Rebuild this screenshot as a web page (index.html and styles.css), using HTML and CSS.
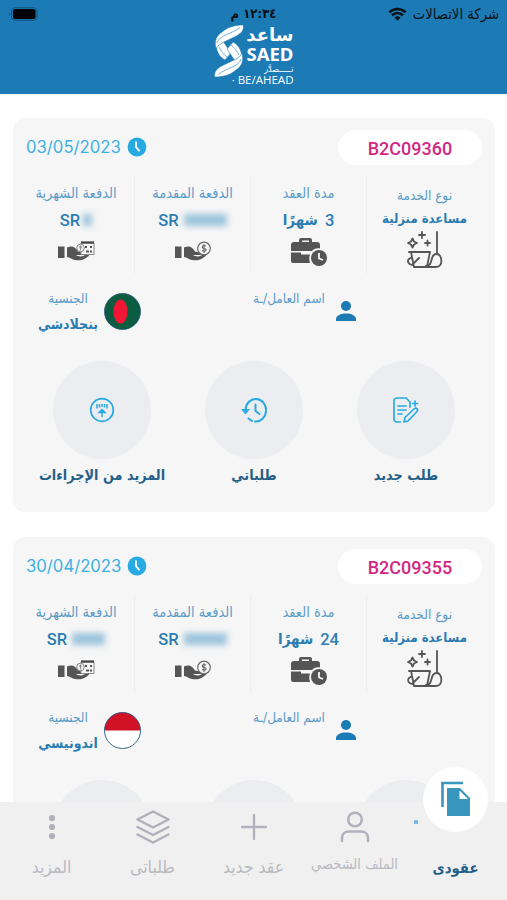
FILE: index.html
```html
<!DOCTYPE html>
<html lang="ar" dir="rtl">
<head>
  <meta charset="UTF-8" />
  <meta name="viewport" content="width=device-width, initial-scale=1.0"/>
  <title>ساعد - عقودي</title>
  <link rel="stylesheet" href="styles.css">
</head>
<body>
  <!-- Shared icons -->
  <svg class="sprite" width="0" height="0">
    <symbol id="i-clock" viewBox="0 0 20 20">
      <circle cx="10" cy="10" r="9.4" fill="#27aae1"/>
      <path d="M9 5.2v5l3 3.4" fill="none" stroke="#fff" stroke-width="1.8" stroke-linecap="round"/>
    </symbol>
    <symbol id="i-clean" viewBox="0 0 37 38">
      <g fill="none" stroke="#555" stroke-width="1.8" stroke-linejoin="round" stroke-linecap="round">
        <path d="M6.500 7.500 8 10.500l3 1.500-3 1.500-1.500 3L5 13.500 2 12l3-1.500zM16 1v6M13 4h6M21.500 9.500v5M19 12h5M31 1v22M3 21h21M5 21l3 15M24 21l-3 14.500M8 36h22c8 0 6-13 1-13-8 0-3 12-11 12M13 27l-7 7c-4-1-5-4-3-6l3-2"/>
      </g>
    </symbol>
    <symbol id="i-case" viewBox="0 0 38 30">
      <path fill-rule="evenodd" d="M9 5V3a2 2 0 0 1 2-2h9a2 2 0 0 1 2 2v2h5a3 3 0 0 1 3 3v3.500c-4-.5-6 .5-8 2.500H1V8a3 3 0 0 1 3-3zM12 5h7V3.500h-7zM1 15.500h10v2h9c-1 3-1 5 0 8.500H3a2 2 0 0 1-2-2z" fill="#555"/>
      <circle cx="29" cy="21" r="8" fill="#555"/>
      <path d="M29 16v5.500l4 1.500" fill="none" stroke="#f6f6f6" stroke-width="1.800"/>
    </symbol>
    <symbol id="i-hand" viewBox="0 0 38 20">
      <path d="M1 5.500h6.500V17H1zM10 6.500c5-2 8-1 11 4l5 1c2 1 1 2.500-1 2.500h-6c3 2 6 1.500 8 .5l4-1.500c2 0 1 2 0 2.500-4 3.500-9 4.500-13 3.500-3 0-5-3-8-3z" fill="#555"/>
    </symbol>
    <symbol id="i-coin" viewBox="0 0 38 20">
      <use href="#i-hand"/>
      <circle cx="30" cy="7.500" r="6.300" fill="#f6f6f6" stroke="#666" stroke-width="1.200"/>
      <path d="M32 5c-4-2-5 2-2 2.500 4 .5 2 4-2 2M30 3v9" fill="none" stroke="#666" stroke-width="1.100"/>
    </symbol>
    <symbol id="i-calendar" viewBox="0 0 38 20">
      <use href="#i-hand"/>
      <path d="M24 2h13v11.500H24z" fill="#f6f6f6" stroke="#888" stroke-width="1"/>
      <path d="M24 1.500h13" stroke="#444" stroke-width="2.200"/>
      <path d="M28 6h2m3 0h2M29 10.500h3m1 0h2" stroke="#555" stroke-width="2"/>
      <circle cx="23.500" cy="7" r="3.800" fill="#eee" stroke="#888"/>
      <path d="M23.500 4.500v5M22 6h3" stroke="#777" stroke-width=".8"/>
    </symbol>
    <symbol id="i-person" viewBox="0 0 20 20">
      <circle cx="10" cy="5" r="5" fill="#1c7ab5"/>
      <path d="M0 20v-2c0-3.500 5-5.500 10-5.500s10 2 10 5.500v2z" fill="#1c7ab5"/>
    </symbol>
    <symbol id="i-new" viewBox="0 0 26 26">
      <g fill="none" stroke="#27aae1" stroke-width="1.700" stroke-linecap="round" stroke-linejoin="round">
        <path d="M7.500 25H4a3 3 0 0 1-3-3V4a3 3 0 0 1 3-3h9l4 4v5M5 9h8M5 13h8M5 17h4M12 20.500 21.500 11.500c2-1 4 1 2.500 3L15 24l-4 1zM22 4v5M19.500 6.500h5"/>
      </g>
    </symbol>
    <symbol id="i-history" viewBox="0 0 26 26">
      <path d="M4.500 13a10.300 11.300 0 1 1 9.500 11.500M11 24l-3.500-2.500M14.500 7.500v6.500l4 3" fill="none" stroke="#27aae1" stroke-width="2" stroke-linecap="round" stroke-linejoin="round"/>
      <path d="M0 12h9l-4.500 5.500z" fill="#27aae1"/>
    </symbol>
    <symbol id="i-upload" viewBox="0 0 26 26">
      <circle cx="13" cy="13" r="11.300" fill="none" stroke="#27aae1" stroke-width="1.700"/>
      <path d="M8 7v4.500M10.500 7v3.500M13 7v3M15.500 7v3.500M18 7v4.500" stroke="#27aae1" stroke-width="1.500"/>
      <path d="M13 20v-6M10 15.500 13 12.500l3 3z" fill="#27aae1" stroke="#27aae1" stroke-width="1.500"/>
    </symbol>
  </svg>

  <header class="top">
    <div class="status">
      <div class="carrier">
        <span>شركة الاتصالات</span>
        <svg width="19" height="14" viewBox="0 0 19 14">
          <path d="M1.300 5.300c5-4.500 11.400-4.500 16.400 0M4 8.300c3.500-3 7.500-3 11 0" fill="none" stroke="#0b1117" stroke-width="2.500"/>
          <path d="M6.500 10.500c2-1.600 4-1.600 6 0l-3 3.200z" fill="#0b1117"/>
        </svg>
      </div>
      <div class="time">١٢:٣٤ م</div>
      <svg class="battery" width="30" height="14" viewBox="0 0 30 14">
        <rect x="3.500" y=".7" width="25.500" height="12.600" rx="4" fill="none" stroke="#155a86" stroke-width="1.200"/>
        <rect x="5" y="2" width="22.500" height="10" rx="2.500" fill="#000"/>
        <path d="M2 5v4Q0 7 2 5" fill="#155a86"/>
      </svg>
    </div>
    <div class="logo">
      <div class="logo-text">
        <span class="logo-ar">ساعد</span>
        <span class="logo-en">SAED</span>
        <span class="logo-sub">تـــــصدَّر</span>
        <span class="logo-tag">· BE/AHEAD</span>
      </div>
      <svg width="30" height="52" viewBox="0 0 30 52">
        <defs>
          <g id="ribbons">
            <path d="M2 17c0 8 2 14 9 18l6-7L9 16z"/>
            <path d="M29.500 0c.5 6-3 9-9 12L10 17c-4 2-7 4-8 7-2-8 0-13 6-17C14 2 20 0 29.500 0z"/>
            <path d="M3 18C5 10 18 9 26 2.500M5 22c2 4 4 7 8 10" fill="none"/>
          </g>
        </defs>
        <g fill="#fff" stroke="#1c7ab5" stroke-width=".6">
          <use href="#ribbons"/>
          <use href="#ribbons" transform="rotate(180 15 26)"/>
        </g>
      </svg>
    </div>
  </header>

  <main class="contracts">
    <section class="card">
      <div class="card-head">
        <div class="contract-no">B2C09360</div>
        <div class="date"><svg width="20" height="20"><use href="#i-clock"/></svg><span>03/05/2023</span></div>
      </div>
      <div class="details">
        <div class="detail service">
          <span class="label">نوع الخدمة</span>
          <span class="value">مساعدة منزلية</span>
          <svg width="37" height="38"><use href="#i-clean"/></svg>
        </div>
        <div class="detail">
          <span class="label">مدة العقد</span>
          <span class="value months"><b>3</b> شهرًا</span>
          <svg width="38" height="30"><use href="#i-case"/></svg>
        </div>
        <div class="detail">
          <span class="label">الدفعة المقدمة</span>
          <span class="value price"><b>SR</b><i class="hidden-amount"></i></span>
          <svg width="38" height="20"><use href="#i-coin"/></svg>
        </div>
        <div class="detail">
          <span class="label">الدفعة الشهرية</span>
          <span class="value price"><b>SR</b><i class="hidden-amount tiny"></i></span>
          <svg width="38" height="20"><use href="#i-calendar"/></svg>
        </div>
      </div>
      <div class="worker">
        <div class="worker-name">
          <svg width="20" height="20"><use href="#i-person"/></svg>
          <span class="label">اسم العامل/ـة</span>
        </div>
        <div class="nation">
          <svg width="37" height="37" viewBox="0 0 37 37">
            <circle cx="18.500" cy="18.500" r="18" fill="#0b5c41" stroke="#24577a" stroke-width=".8"/>
            <ellipse cx="16.500" cy="18.500" rx="7" ry="12" fill="#f21635"/>
          </svg>
          <div class="nation-text">
            <span class="label">الجنسية</span>
            <span class="value">بنجلادشي</span>
          </div>
        </div>
      </div>
      <div class="actions">
        <div class="action"><div class="round"><svg width="26" height="26"><use href="#i-new"/></svg></div><span>طلب جديد</span></div>
        <div class="action"><div class="round"><svg width="26" height="26"><use href="#i-history"/></svg></div><span>طلباتي</span></div>
        <div class="action"><div class="round"><svg width="26" height="26"><use href="#i-upload"/></svg></div><span>المزيد من الإجراءات</span></div>
      </div>
    </section>

    <section class="card">
      <div class="card-head">
        <div class="contract-no">B2C09355</div>
        <div class="date"><svg width="20" height="20"><use href="#i-clock"/></svg><span>30/04/2023</span></div>
      </div>
      <div class="details">
        <div class="detail service">
          <span class="label">نوع الخدمة</span>
          <span class="value">مساعدة منزلية</span>
          <svg width="37" height="38"><use href="#i-clean"/></svg>
        </div>
        <div class="detail">
          <span class="label">مدة العقد</span>
          <span class="value months"><b>24</b> شهرًا</span>
          <svg width="38" height="30"><use href="#i-case"/></svg>
        </div>
        <div class="detail">
          <span class="label">الدفعة المقدمة</span>
          <span class="value price"><b>SR</b><i class="hidden-amount"></i></span>
          <svg width="38" height="20"><use href="#i-coin"/></svg>
        </div>
        <div class="detail">
          <span class="label">الدفعة الشهرية</span>
          <span class="value price"><b>SR</b><i class="hidden-amount medium"></i></span>
          <svg width="38" height="20"><use href="#i-calendar"/></svg>
        </div>
      </div>
      <div class="worker">
        <div class="worker-name">
          <svg width="20" height="20"><use href="#i-person"/></svg>
          <span class="label">اسم العامل/ـة</span>
        </div>
        <div class="nation">
          <svg width="37" height="37" viewBox="0 0 37 37">
            <circle cx="18.500" cy="18.500" r="18" fill="#fff"/>
            <path d="M.5 18.500a18 18 0 0 1 36 0z" fill="#d01126"/>
            <circle cx="18.500" cy="18.500" r="18" fill="none" stroke="#24577a" stroke-width=".9"/>
          </svg>
          <div class="nation-text">
            <span class="label">الجنسية</span>
            <span class="value">اندونيسي</span>
          </div>
        </div>
      </div>
      <div class="actions">
        <div class="action"><div class="round"></div></div>
        <div class="action"><div class="round"></div></div>
        <div class="action"><div class="round"></div></div>
      </div>
    </section>
  </main>

  <nav class="tabs">
    <div class="tab active">
      <div class="bubble">
        <svg width="30" height="36" viewBox="0 0 30 36">
          <path d="M1.500 26V2H22" fill="none" stroke="#3996bd" stroke-width="2.600"/>
          <path d="M6 7h13l10 10v18H6z" fill="#3996bd"/>
          <path d="M18.500 9.500v8.500H27z" fill="#fff"/>
        </svg>
      </div>
      <span>عقودى</span>
    </div>
    <div class="tab profile">
      <svg width="30" height="32" viewBox="0 0 30 32" fill="none" stroke="#b0b1bd" stroke-width="2.500" stroke-linecap="round">
        <circle cx="15" cy="8.500" r="6.800"/>
        <path d="M2 30v-3c0-4 3-6.500 7-6.500h12c4 0 7 2.500 7 6.500v3"/>
      </svg>
      <span>الملف الشخصي</span>
    </div>
    <div class="tab">
      <svg width="26" height="26" viewBox="0 0 26 26" stroke="#b0b1bd" stroke-width="2.300" stroke-linecap="round"><path d="M13 1v24M1 13h24"/></svg>
      <span>عقد جديد</span>
    </div>
    <div class="tab">
      <svg width="34" height="34" viewBox="0 0 34 34" fill="none" stroke="#b0b1bd" stroke-width="2.500" stroke-linecap="round" stroke-linejoin="round"><path d="M17 1.500 32.500 9.500 17 17.500 1.500 9.500zM1.500 17 17 25l15.500-8M1.500 24.500l15.500 8 15.500-8"/></svg>
      <span>طلباتى</span>
    </div>
    <div class="tab">
      <svg width="8" height="26" viewBox="0 0 8 26" fill="#b0b1bd"><circle cx="4" cy="4" r="3.100"/><circle cx="4" cy="13" r="3.100"/><circle cx="4" cy="22" r="3.100"/></svg>
      <span>المزيد</span>
    </div>
  </nav>
</body>
</html>
```
FILE: styles.css
```css
* {
  box-sizing: border-box;
  margin: 0;
  padding: 0;
}

body {
  font-family: "DejaVu Sans Condensed", "DejaVu Sans", sans-serif;
  background-color: #fff;
  height: 900px;
  overflow: hidden;
}

svg {
  display: block;
  flex: none;
}

.sprite {
  position: absolute;
}

span {
  white-space: nowrap;
}

/* Header */
.top {
  height: 94px;
  background-color: #1c7ab5;
}

.status {
  height: 25px;
  padding: 2px 8px 0;
  display: grid;
  grid-template-columns: 1fr 60px 1fr;
  align-items: center;
  color: #0b1117;
  font-size: 14.7px;
}

.carrier {
  display: flex;
  align-items: center;
  gap: 6px;
}

.time {
  text-align: center;
  white-space: nowrap;
  font-weight: bold;
  font-size: 13px;
}

.battery {
  justify-self: end;
}

.logo {
  display: flex;
  justify-content: center;
  gap: 3px;
  color: #fff;
}

.logo-text {
  display: flex;
  flex-direction: column;
  width: 47px;
}

.logo-ar {
  font-family: "DejaVu Sans", sans-serif;
  font-size: 18px;
  font-weight: bold;
  line-height: 19px;
}

.logo-en {
  font: bold 18.5px/20px "Noto Sans", sans-serif;
  direction: ltr;
}

.logo-sub {
  font-size: 9px;
  line-height: 10px;
}

.logo-tag {
  font: 11.5px/11px "Open Sans", sans-serif;
  direction: ltr;
  align-self: flex-start;
}

/* Contract cards */
.contracts {
  height: 806px;
  overflow: hidden;
  padding: 24px 12px 0 13px;
}

.card {
  height: 394px;
  margin-bottom: 25px;
  padding: 12px 13px 0;
  border-radius: 12px;
  background-color: #f6f6f6;
}

.card-head {
  display: flex;
  justify-content: space-between;
  height: 46px;
}

.contract-no {
  width: 144px;
  height: 35px;
  border-radius: 18px;
  background-color: #fff;
  color: #d12783;
  font: 500 18px/37px Roboto, sans-serif;
  text-align: center;
}

.date {
  display: flex;
  align-items: center;
  gap: 6px;
  height: 34px;
  color: #3db0e3;
  font: 16.7px Inter, sans-serif;
}

.details {
  display: grid;
  grid-template-columns: repeat(4, 116px);
  height: 98px;
  margin-left: -7px;
}

.detail {
  display: flex;
  flex-direction: column;
  align-items: center;
  padding-top: 7px;
  border-left: 1px solid #eee;
}

.detail:last-child {
  border-left: none;
}

.detail.service {
  padding-top: 9px;
}

.label {
  color: #5c9cc7;
  font-size: 13.5px;
  line-height: 20px;
}

.detail .label {
  font-size: 14.5px;
}

.detail.service .label {
  font-size: 13.5px;
}

.value {
  color: #2b7db2;
  font-size: 14px;
  font-weight: bold;
  line-height: 20px;
}

.detail .value {
  height: 24px;
  margin-top: 5px;
}

.detail.service .value {
  margin-top: 4px;
  height: 22px;
  font-size: 13px;
}

.detail svg {
  margin-top: 5px;
}

.detail.service svg {
  margin-top: 0;
}

.price,
.months {
  display: flex;
  align-items: center;
  gap: 5px;
}

.price {
  direction: ltr;
}

.detail .months {
  gap: 7px;
  font-size: 15px;
}

.value b {
  font: 500 16.5px Roboto, sans-serif;
}

.detail .price + svg {
  margin-top: 9px;
}

.hidden-amount {
  width: 43px;
  height: 12px;
  background-color: #9cc3db;
  filter: blur(3px);
}

.hidden-amount.medium {
  width: 33px;
}

.hidden-amount.tiny {
  width: 9px;
  margin-left: -2px;
}

/* Worker */
.worker {
  display: flex;
  justify-content: space-between;
  height: 87px;
  padding: 14px 126px 0 12px;
}

.worker-name {
  display: flex;
  gap: 11px;
}

.worker-name svg {
  margin-top: 13px;
}

.nation {
  display: flex;
  gap: 6px;
}

.nation svg {
  margin-top: 5px;
}

.nation-text {
  display: flex;
  flex-direction: column;
  align-items: center;
  width: 60px;
}

.nation-text .value {
  margin-top: 6px;
}

/* Round action buttons */
.actions {
  display: grid;
  grid-template-columns: repeat(3, 152px);
}

.action {
  display: flex;
  flex-direction: column;
  align-items: center;
  color: #245f87;
  font-size: 14.3px;
  font-weight: bold;
}

.round {
  width: 98px;
  height: 98px;
  border-radius: 50%;
  background-color: #ecedf1;
  display: flex;
  align-items: center;
  justify-content: center;
}

.action span {
  margin-top: 5px;
  line-height: 22px;
}

.tabs {
  position: fixed;
  left: 0;
  right: 0;
  bottom: 0;
  height: 98px;
  display: grid;
  grid-template-columns: repeat(5, 101px);
  justify-content: center;
  background-color: #f0f0f1;
}

.tab {
  display: grid;
  grid-template-rows: 50px 30px;
  align-items: center;
  justify-items: center;
  color: #b9bac0;
  font-size: 17.5px;
}

.tab.profile {
  font-size: 14.5px;
}

.tab.profile span {
  margin-top: -6px;
}

.tab.active {
  color: #245f87;
  font-size: 14.8px;
  font-weight: bold;
}

.bubble {
  position: relative;
  width: 65px;
  height: 65px;
  margin-top: -56px;
  border-radius: 50%;
  background-color: #fff;
  display: flex;
  align-items: center;
  justify-content: center;
}

/* Tip of the icon behind the bubble */
.bubble::before {
  content: "";
  position: absolute;
  left: -9px;
  top: 53px;
  width: 4px;
  height: 4px;
  border-radius: 1px;
  background-color: #6cbcec;
}
```
